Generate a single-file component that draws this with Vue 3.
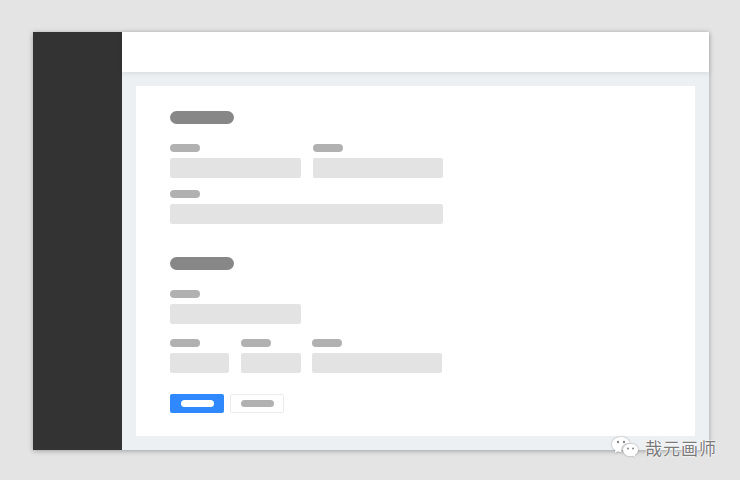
<template>
  <div class="page">
    <div class="frame">
      <aside class="sidebar"></aside>
      <div class="main">
        <header class="topbar"></header>
        <div class="content">
          <div class="card">
            <div class="pill title"></div>
            <div class="row row-first">
              <div v-for="(w, i) in firstRow" :key="i" class="field" :style="{ width: w + 'px' }">
                <div class="pill label"></div>
                <div class="input"></div>
              </div>
            </div>
            <div class="row row-next">
              <div class="field wide">
                <div class="pill label"></div>
                <div class="input"></div>
              </div>
            </div>

            <div class="pill title title-second"></div>
            <div class="row row-first">
              <div class="field" style="width: 130.5px">
                <div class="pill label"></div>
                <div class="input"></div>
              </div>
            </div>
            <div class="row row-third">
              <div v-for="(w, i) in thirdRow" :key="i" class="field" :style="{ width: w + 'px' }">
                <div class="pill label"></div>
                <div class="input"></div>
              </div>
            </div>

            <div class="actions">
              <div class="btn primary"><span class="btn-pill"></span></div>
              <div class="btn plain"><span class="btn-pill"></span></div>
            </div>
          </div>
        </div>
      </div>
    </div>

    <div class="watermark">
      <svg width="28" height="24" viewBox="0 0 28 24" class="wechat">
        <path d="M10 1C4.9 1 1 4.3 1 8.4c0 2.4 1.300 4.300 3.400 5.800L3.600 17l3-1.600c1 .3 2 .5 3.100.5h.8c-.2-.6-.3-1.300-.3-2 0-3.800 3.400-6.800 7.700-6.800h.7C17.800 3.500 14.300 1 10 1z" fill="#fff" />
        <path d="M27 13.900c0-3.400-3.400-6.200-7.400-6.200-4.200 0-7.500 2.800-7.500 6.200s3.300 6.200 7.500 6.200c.9 0 1.700-.1 2.500-.4l2.400 1.300-.7-2.200c2-1.200 3.200-2.900 3.200-4.900z" fill="#fff" />
        <circle cx="7" cy="6" r="1.200" fill="#888" />
        <circle cx="13" cy="6" r="1.200" fill="#888" />
        <circle cx="17" cy="12.500" r="1" fill="#888" />
        <circle cx="22" cy="12.500" r="1" fill="#888" />
      </svg>
      <span class="mark-text">哉元画师</span>
    </div>
  </div>
</template>

<script setup>
const firstRow = [130.5, 130]
const thirdRow = [59, 59.5, 130.5]
</script>

<style>
html,
body {
  margin: 0;
  background: #e4e4e4;
}
</style>

<style scoped>
.page {
  position: relative;
  width: 740px;
  height: 480px;
  padding: 32px 31px 30px 33px;
  box-sizing: border-box;
  background: #e4e4e4;
  overflow: hidden;
}

.frame {
  display: flex;
  height: 418px;
  box-shadow: 0 1px 5px rgba(0, 0, 0, 0.3);
}

.sidebar {
  width: 89px;
  flex: none;
  background: #333333;
}

.main {
  flex: 1;
  display: flex;
  flex-direction: column;
  background: #edf0f3;
}

.topbar {
  height: 40px;
  flex: none;
  background: #fff;
  box-shadow: 0 1px 5px rgba(0, 0, 0, 0.1);
}

.content {
  flex: 1;
  padding: 14px;
}

.card {
  height: 100%;
  padding: 25px 34px 0;
  box-sizing: border-box;
  background: #fff;
}

.pill {
  border-radius: 7px;
}

.title {
  width: 64px;
  height: 13px;
  background: #878787;
}

.title-second {
  margin-top: 33.5px;
}

.row {
  display: flex;
  gap: 12px;
}

.row-first {
  margin-top: 20px;
}

.row-next {
  margin-top: 12.5px;
}

.row-third {
  margin-top: 15.5px;
}

.row-third .field:last-child {
  margin-left: -1px;
}

.field {
  display: flex;
  flex-direction: column;
  gap: 5.5px;
}

.field.wide {
  width: 272.5px;
}

.label {
  width: 30px;
  height: 8px;
  background: #b1b1b1;
}

.input {
  height: 20px;
  border-radius: 2px;
  background: #e3e3e3;
}

.actions {
  display: flex;
  gap: 6px;
  margin-top: 21.5px;
}

.btn {
  display: flex;
  align-items: center;
  justify-content: center;
  width: 54px;
  height: 19px;
  box-sizing: border-box;
  border-radius: 2px;
}

.btn.primary {
  background: #2f89fc;
}

.btn.plain {
  background: #fff;
  border: 1px solid #ececec;
}

.btn-pill {
  width: 33px;
  height: 7px;
  border-radius: 3.5px;
  background: #fff;
}

.btn.plain .btn-pill {
  background: #b1b1b1;
}

.watermark {
  position: absolute;
  left: 611px;
  top: 436px;
  display: flex;
  align-items: center;
  gap: 6px;
}

.wechat {
  flex: none;
  filter: drop-shadow(0 0 1px rgba(0, 0, 0, 0.3));
}

.mark-text {
  font-family: "Noto Sans CJK SC", sans-serif;
  font-size: 17px;
  line-height: 24px;
  color: #7a7a7a;
  letter-spacing: 1px;
  text-shadow: 0 0 2px #fff, 0 0 2px #fff, 0 0 1px #fff;
}
</style>
